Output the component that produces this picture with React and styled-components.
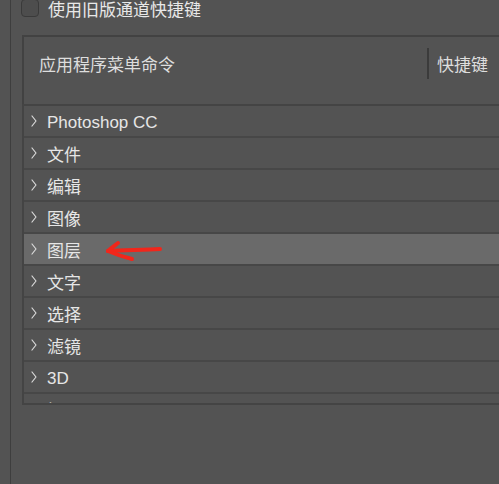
import styled, { createGlobalStyle } from "styled-components";

const GlobalStyle = createGlobalStyle`
  html, body {
    margin: 0;
    background: #535353;
    overflow: hidden;
  }
  body {
    font-family: "Liberation Sans", "Noto Sans CJK SC", sans-serif;
    color: #e4e4e4;
  }
  * {
    box-sizing: border-box;
  }
`;

const Page = styled.div`
  display: flex;
  height: 484px;
  width: 499px;
  overflow: hidden;
`;

const Gutter = styled.div`
  width: 11px;
  border-right: 1px solid #3e3e3e;
`;

const Main = styled.div`
  flex: 1;
  padding-left: 10px;
  display: flex;
  flex-direction: column;
`;

const CheckRow = styled.label`
  display: flex;
  align-items: center;
  gap: 9px;
  height: 24px;
  margin-top: -4px;
  font-size: 17px;
  color: #e8e8e8;
`;

const CheckBox = styled.span`
  width: 18px;
  height: 18px;
  border: 1px solid #3a3a3a;
  border-radius: 4px;
  background: #4d4d4d;
`;

const Header = styled.div`
  display: flex;
  align-items: flex-start;
  height: 69px;
  margin-top: 15px;
  margin-left: 1px;
  padding-top: 11px;
  border-top: 2px solid #424242;
  border-left: 2px solid #424242;
  font-size: 17px;
  color: #dedede;
`;

const HeaderTitle = styled.div`
  flex: 1;
  height: 31px;
  display: flex;
  align-items: center;
  padding-left: 15px;
`;

const Divider = styled.div`
  width: 2px;
  height: 31px;
  background: #3b3b3b;
`;

const ShortcutTitle = styled.div`
  width: 70px;
  height: 31px;
  display: flex;
  align-items: center;
  padding-left: 8px;
`;

const List = styled.div`
  height: 301px;
  margin-left: 1px;
  border-top: 2px solid #444;
  border-left: 2px solid #444;
  border-bottom: 2px solid #444;
  overflow: hidden;
`;

const Row = styled.div`
  position: relative;
  display: flex;
  align-items: center;
  gap: 10px;
  height: 32px;
  padding-left: 7px;
  border-bottom: 2px solid #474747;
  background: ${(p) => (p.$active ? "#6a6a6a" : "#535353")};
  font-size: 17px;
  color: #e6e6e6;
`;

const Label = styled.span`
  padding-top: ${(p) => (p.$latin ? "4px" : "0")};
`;

const Chevron = () => (
  <svg width="6" height="12" viewBox="0 0 6 12">
    <polyline
      points="1,1 5,6 1,11"
      fill="none"
      stroke="#dcdcdc"
      strokeWidth="1.2"
      strokeLinecap="round"
      strokeLinejoin="round"
    />
  </svg>
);

const ArrowMark = styled.svg`
  position: absolute;
  left: 81px;
  top: 3px;
`;

const RedArrow = () => (
  <ArrowMark width="62" height="26" viewBox="0 0 62 26">
    <path
      d="M3 14 C 18 13, 38 13, 55 12"
      fill="none"
      stroke="#f2261b"
      strokeWidth="4"
      strokeLinecap="round"
    />
    <path
      d="M13 6 C 9 9, 6 11, 3 14 C 10 17, 19 20, 27 22"
      fill="none"
      stroke="#f2261b"
      strokeWidth="4"
      strokeLinecap="round"
      strokeLinejoin="round"
    />
  </ArrowMark>
);

const items = [
  "Photoshop CC",
  "文件",
  "编辑",
  "图像",
  "图层",
  "文字",
  "选择",
  "滤镜",
  "3D",
  "视图",
];

export default function App() {
  return (
    <>
      <GlobalStyle />
      <Page>
        <Gutter />
        <Main>
          <CheckRow>
            <CheckBox />
            <span>使用旧版通道快捷键</span>
          </CheckRow>
          <Header>
            <HeaderTitle>应用程序菜单命令</HeaderTitle>
            <Divider />
            <ShortcutTitle>快捷键</ShortcutTitle>
          </Header>
          <List>
            {items.map((label) => (
              <Row key={label} $active={label === "图层"}>
                <Chevron />
                <Label $latin={/^[A-Za-z0-9 ]+$/.test(label)}>{label}</Label>
                {label === "图层" && <RedArrow />}
              </Row>
            ))}
          </List>
        </Main>
      </Page>
    </>
  );
}
